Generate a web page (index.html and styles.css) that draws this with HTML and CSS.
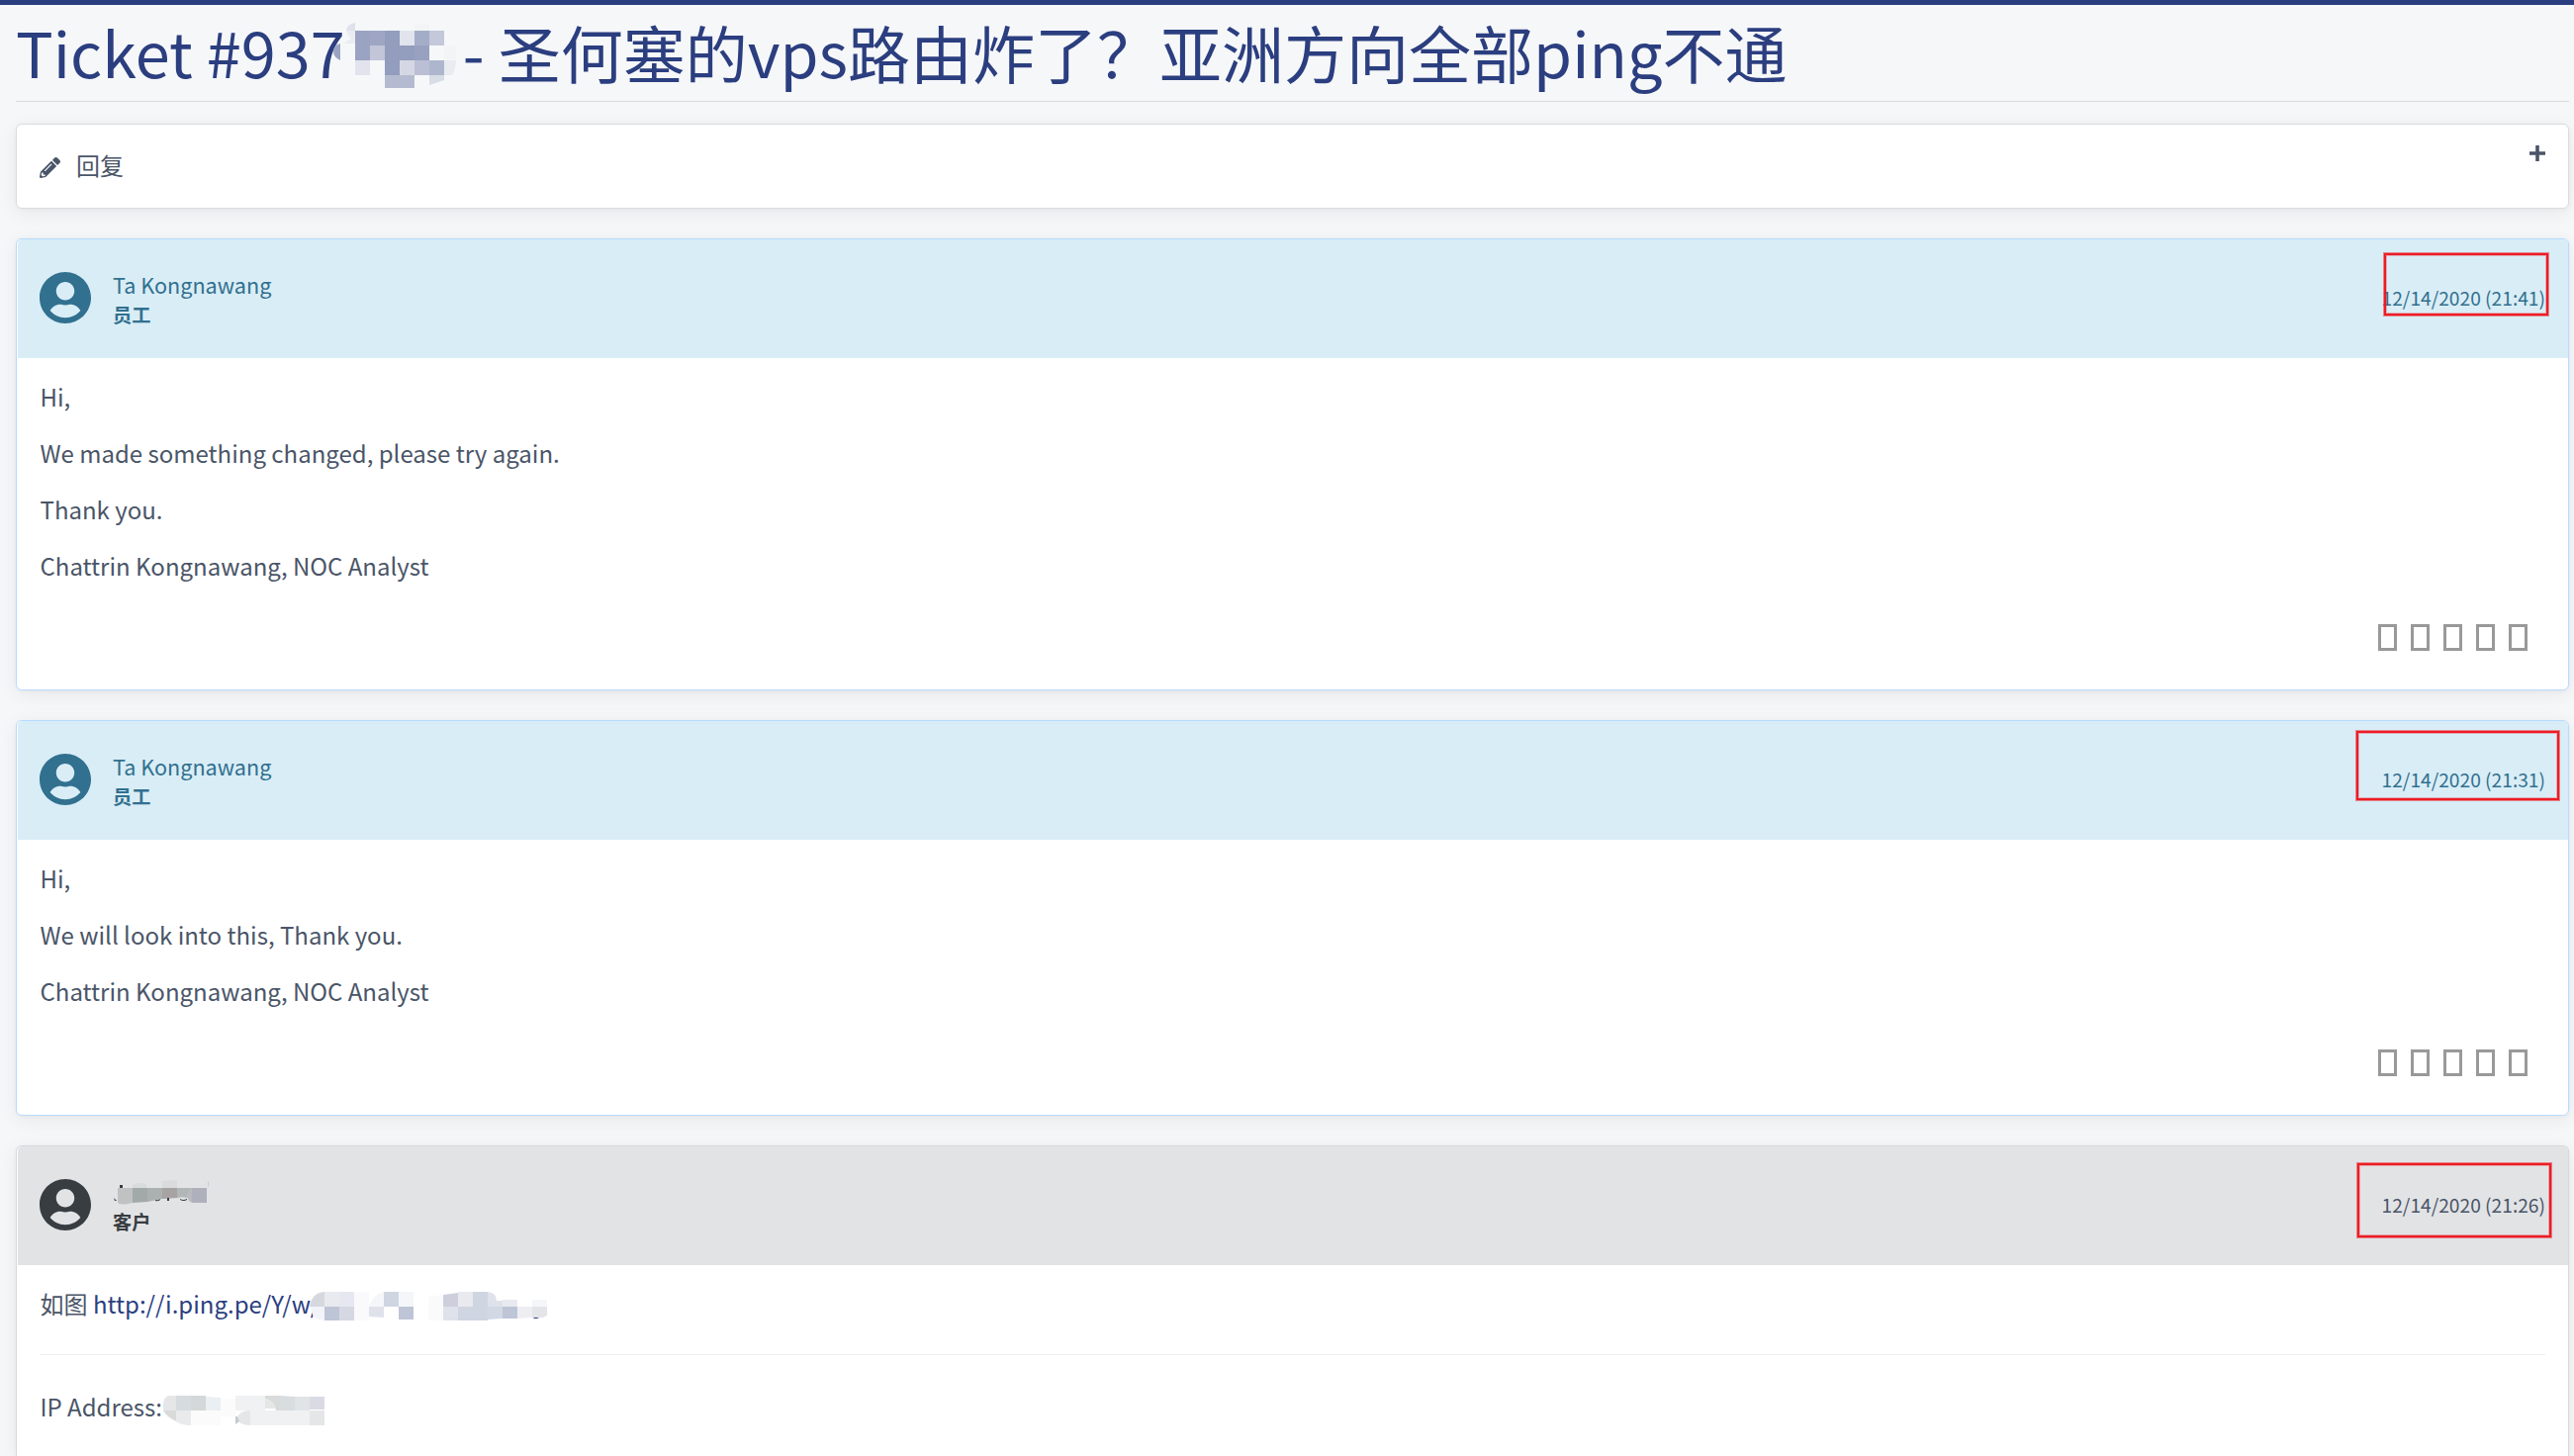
FILE: index.html
```
<!DOCTYPE html>
<html lang="zh-CN">
<head>
    <meta charset="UTF-8">
    <meta name="viewport" content="width=device-width, initial-scale=1.0">
    <title>Ticket #937 - 圣何塞的vps路由炸了？亚洲方向全部ping不通</title>
    <link rel="stylesheet" href="styles.css">
</head>
<body>
    <svg class="sprite" xmlns="http://www.w3.org/2000/svg">
        <symbol id="user" viewBox="0 8 496 496">
            <path d="M248 8C111 8 0 119 0 256s111 248 248 248 248-111 248-248S385 8 248 8zm0 96c48.6 0 88 39.4 88 88s-39.4 88-88 88-88-39.4-88-88 39.4-88 88-88zm0 344c-58.7 0-111.3-26.6-146.5-68.2 18.8-35.4 55.6-59.8 98.5-59.8 2.4 0 4.8.4 7.1 1.1 13 4.2 26.6 6.9 40.9 6.9 14.3 0 28-2.7 40.9-6.9 2.3-.7 4.7-1.1 7.1-1.1 42.9 0 79.7 24.4 98.5 59.8C359.3 421.4 306.7 448 248 448z"/>
        </symbol>
    </svg>

    <div class="page">
        <h1 class="title">Ticket #937<span class="censor censor-id"><svg viewBox="344 15 125 70" width="125" height="70">
            <path fill="#dfe2eb" d="M359 23v8h-9q1-7 9-8z"/>
            <path fill="#e9ecf1" d="M350 31h9v13h-12l8-5q-4-3-5-8z"/>
            <path fill="#9aa4c2" d="M344 44v17q-7-3-7-9t7-8z"/>
            <path fill="#9aa3c1" d="M359 31h15v30h-15z"/>
            <path fill="#9ea6c4" d="M374 31h15v15h-15z"/>
            <path fill="#c2c6d8" d="M374 46h15v15h-15z"/>
            <path fill="#939dbd" d="M389 31h15v45h-15zM404 46h15v15h-15z"/>
            <path fill="#e1e4ec" d="M404 31h15v15h-15zM359 61h15v15h-15z"/>
            <path fill="#a3adc7" d="M419 31h15v15h-15z"/>
            <path fill="#c3c8da" d="M434 31h15v15h-15z"/>
            <path fill="#98a1c0" d="M419 46h15v15h-15z"/>
            <path fill="#d5d8e4" d="M404 61h15v15h-15z"/>
            <path fill="#babfd5" d="M419 61h15v15h-15z"/>
            <path fill="#aeb6cd" d="M434 61h15v15h-15z"/>
            <path fill="#b4bbd1" d="M389 76h30v13h-30z"/>
            <path fill="#d7dce6" d="M434 76h15v5l-15 5z"/>
            <path fill="#e8ebf0" d="M449 61h12q0 9-4 15h-8z"/>
            <path fill="#f2f4f6" d="M419 24h15v7h-15zM449 46h12v15h-12z"/>
        </svg></span> - 圣何塞的vps路由炸了？亚洲方向全部ping不通</h1>

        <div class="panel reply">
            <svg class="pencil" viewBox="0 0 512 512"><path d="M497.9 142.1l-46.1 46.1c-4.7 4.7-12.3 4.7-17 0l-111-111c-4.7-4.7-4.7-12.3 0-17l46.1-46.1c18.7-18.7 49.1-18.7 67.9 0l60.1 60.1c18.8 18.7 18.8 49.1 0 67.9zM284.2 99.8L21.6 362.4.4 483.9c-2.9 16.4 11.4 30.6 27.8 27.8l121.5-21.3 262.6-262.6c4.7-4.7 4.7-12.3 0-17l-111-111c-4.8-4.7-12.4-4.7-17.1 0zM124.1 339.9c-5.5-5.5-5.5-14.3 0-19.8l154-154c5.5-5.5 14.3-5.5 19.8 0s5.5 14.3 0 19.8l-154 154c-5.5 5.5-14.3 5.5-19.8 0zM88 424h48v36.3l-64.5 11.3-31.1-31.1L51.7 376H88v48z"/></svg>
            <span class="reply-label">回复</span>
            <svg class="plus" viewBox="0 0 16 16"><path d="M6.2 0h3.6v6.2H16v3.6H9.8V16H6.2V9.8H0V6.2h6.2z"/></svg>
        </div>

        <div class="panel staff">
            <div class="panel-head">
                <svg class="avatar"><use href="#user"/></svg>
                <div class="user">
                    <div class="name">Ta Kongnawang</div>
                    <div class="role">员工</div>
                </div>
                <div class="date">12/14/2020 (21:41)</div>
                <div class="mark mark-1"></div>
            </div>
            <div class="message">
                <p>Hi,</p>
                <p>We made something changed, please try again.</p>
                <p>Thank you.</p>
                <p>Chattrin Kongnawang, NOC Analyst</p>
            </div>
            <div class="rating"><span></span><span></span><span></span><span></span><span></span></div>
        </div>

        <div class="panel staff">
            <div class="panel-head">
                <svg class="avatar"><use href="#user"/></svg>
                <div class="user">
                    <div class="name">Ta Kongnawang</div>
                    <div class="role">员工</div>
                </div>
                <div class="date">12/14/2020 (21:31)</div>
                <div class="mark mark-2"></div>
            </div>
            <div class="message">
                <p>Hi,</p>
                <p>We will look into this, Thank you.</p>
                <p>Chattrin Kongnawang, NOC Analyst</p>
            </div>
            <div class="rating"><span></span><span></span><span></span><span></span><span></span></div>
        </div>

        <div class="panel client">
            <div class="panel-head">
                <svg class="avatar"><use href="#user"/></svg>
                <div class="user">
                    <div class="name"><svg class="censor-name" viewBox="114 1190 98 29" width="98" height="29">
                        <path fill="#dadbdd" d="M164 1194l15-1v8h-15zM134 1198q7-4 14-1v4h-14z"/>
                        <path fill="#c0c2c2" d="M119 1201h15v15q-12 3-15 0z"/>
                        <path fill="#a2a9a9" d="M134 1201h15v14l-15 1z"/>
                        <path fill="#abb0b0" d="M149 1201h15v11l-15 3z"/>
                        <path fill="#a7a3a2" d="M164 1201h15v10l-15 1z"/>
                        <path fill="#b1b6b7" d="M179 1201h15v12q-6-4-15-2z"/>
                        <path fill="#babbbe" d="M189 1208q2-6 5-7v15q-5-3-5-8z"/>
                        <path fill="#aeb1bb" d="M194 1201h15v15h-15z"/>
                        <path fill="#373c40" d="M121 1198h3v3h-3zM115 1211l3 3h-2zM157 1213q3 1 5-1v1q-2 2-5 1zM169 1211h2v3h-2zM182 1212q3 2 7 0v1q-3 2-7 0z"/>
                        <path fill="#bdd0dc" d="M210 1195h1v5h-1z"/>
                    </svg></div>
                    <div class="role">客户</div>
                </div>
                <div class="date">12/14/2020 (21:26)</div>
                <div class="mark mark-3"></div>
            </div>
            <div class="message">
                <p>如图 <a href="#">http://i.ping.pe/Y/w/</a><span class="censor censor-link"><svg viewBox="314 1304 242 34" width="242" height="34">
                    <path fill="#fff" d="M318 1306h30v30h-30z"/>
                    <path fill="#d6d8e0" d="M329 1306v15h-15q2-14 15-15z"/>
                    <path fill="#e9eaef" d="M329 1306h15v15h-15zM464 1306h15v15h-15zM509 1314h15v7h-15z"/>
                    <path fill="#e5e8f1" d="M344 1306h15v15h-15z"/>
                    <path fill="#fafafc" d="M359 1306h15v29h-15z"/>
                    <path fill="#f4f6f9" d="M389 1306v15h-15q4-12 15-15zM404 1306h15v15h-15zM539 1314h15v7h-15z"/>
                    <path fill="#d0d5e2" d="M389 1306h15v15h-15zM464 1321h30v14h-30zM479 1306h15v15h-15z"/>
                    <path fill="#f3f4fa" d="M314 1321h15v14q-12-1-13-9z"/>
                    <path fill="#bec5d6" d="M329 1321h15v14h-15zM404 1321h15v13h-15zM509 1321h15v12h-15z"/>
                    <path fill="#d5d8e2" d="M344 1321h15v14h-15z"/>
                    <path fill="#dfe2eb" d="M374 1321h15v11l-15-1zM449 1321h15v14h-15zM494 1306q9 1 9 9h6v6h-15z"/>
                    <path fill="#fafafa" d="M434 1311l15-2v26h-15z"/>
                    <path fill="#cdd0dc" d="M449 1309l15-2v14h-15z"/>
                    <path fill="#d2d8e4" d="M494 1321h15v12l-15 1z"/>
                    <path fill="#eeeef2" d="M524 1321h15v11l-15 1z"/>
                    <path fill="#e4e5e9" d="M539 1321h15v9l-4 2h-11z"/>
                    <path fill="#2b3e7f" d="M540 1332h6l-2 1h-3z"/>
                </svg></span></p>
                <hr>
                <p>IP Address: <span class="censor censor-ip"><svg viewBox="166 1409 164 34" width="164" height="34">
                    <path fill="#e4e6e7" d="M179 1411v15h-13q-1-15 6-15zM314 1426h15v15h-15zM254 1426v15q-12 0-13-7 1-8 13-8z"/>
                    <path fill="#d5dbdf" d="M179 1411h15v15h-15z"/>
                    <path fill="#d4d8d8" d="M194 1411h15v15h-15z"/>
                    <path fill="#e9eff3" d="M209 1412l15 1v13h-15z"/>
                    <path fill="#fbfbfb" d="M224 1414h15v18h-15zM194 1426h30v15h-30z"/>
                    <path fill="#f0f1f2" d="M239 1411h30v15h-30zM254 1426h60v15h-60z"/>
                    <path fill="#d9dbdb" d="M269 1411h15v15h-4q-2-10-11-12zM166 1426h13v11q-10-5-13-11z"/>
                    <path fill="#e5e6e6" d="M269 1414q9 2 11 10h-11z"/>
                    <path fill="#d8dde0" d="M284 1411l15 1v14h-15z"/>
                    <path fill="#e0e4e7" d="M299 1412h15v14h-15z"/>
                    <path fill="#dadae4" d="M314 1412h15v13h-15z"/>
                    <path fill="#e9eaeb" d="M179 1426h15v15q-10 0-15-4z"/>
                    <path fill="#c6cace" d="M239 1432h2l2 5-4 3z"/>
                </svg></span></p>
            </div>
        </div>
    </div>
</body>
</html>
```
FILE: styles.css
```
* {
    box-sizing: border-box;
}

body {
    margin: 0;
    height: 1472px;
    overflow: hidden;
    background: #f6f7f9;
    border-top: 5px solid #2b3e7f;
    font-family: 'Noto Sans CJK SC', sans-serif;
    font-size: 24px;
    line-height: 36px;
    color: #4a5568;
}

.sprite {
    position: absolute;
    width: 0;
    height: 0;
}

.page {
    padding: 12px 5px 0 16px;
}

.title {
    margin: 0 0 22px;
    padding-bottom: 15px;
    border-bottom: 1px solid #d9dbdd;
    font-size: 63px;
    font-weight: 400;
    line-height: 70px;
    color: #2b3e7f;
    white-space: nowrap;
}

/* pixelated blocks over private data */
.censor {
    display: inline-block;
    position: relative;
}

.censor svg {
    position: absolute;
    left: 0;
    overflow: visible;
}

.censor-id {
    width: 105px;
    height: 58px;
}

.censor-id svg {
    top: -6px;
    left: -5px;
}

.censor-link {
    width: 242px;
    height: 24px;
}

.censor-link svg {
    top: 0;
    left: -10px;
}

.censor-ip {
    width: 164px;
    height: 24px;
}

.censor-ip svg {
    top: 1px;
    left: -4px;
}

.censor-name {
    display: block;
}

.panel {
    margin-bottom: 30px;
    background: #fff;
    border: 1px solid #dadcde;
    border-radius: 6px;
    box-shadow: 0 4px 20px 1px rgba(0, 0, 0, 0.06), 0 1px 4px rgba(0, 0, 0, 0.04);
}

.reply {
    display: flex;
    align-items: flex-start;
    height: 86px;
    padding: 21px 23px 0;
}

.pencil {
    width: 21px;
    height: 21px;
    margin: 12px 16px 0 0;
    fill: #4a5568;
}

.reply-label {
    margin-top: 2px;
}

.plus {
    width: 16px;
    height: 16px;
    margin-left: auto;
    fill: #4a5568;
}

.staff {
    border-color: #b8daff;
}

.client {
    height: 314px;
    margin-bottom: 0;
    border-color: #d6d8db;
    border-bottom: 0;
    border-radius: 6px 6px 0 0;
}

.panel-head {
    position: relative;
    display: flex;
    align-items: flex-start;
    height: 120px;
    margin-left: 1px;
    padding: 31px 23px 0 22px;
    border-radius: 5px 5px 0 0;
}

.staff .panel-head {
    background: #d9edf6;
    color: #31708f;
}

.client .panel-head {
    background: #e2e3e5;
    color: #383d41;
}

.avatar {
    width: 52px;
    height: 52px;
    margin: 2px 22px 0 0;
    fill: currentColor;
}

.name {
    height: 29px;
    font-size: 21.6px;
    line-height: 29px;
}

.role {
    font-size: 19.2px;
    font-weight: 700;
    line-height: 33px;
}

.date {
    margin: 13px 0 0 auto;
    font-size: 19.2px;
    line-height: 30px;
}

.client .date {
    color: #4a5568;
}

/* red frames around the dates */
.mark {
    position: absolute;
    border: 2px solid #ed1c24;
    box-shadow: 0 0 0 1px rgba(237, 28, 36, 0.5), inset 0 0 0 1px rgba(237, 28, 36, 0.3);
}

.mark-1 {
    top: 14px;
    right: 20px;
    width: 166px;
    height: 63px;
}

.mark-2 {
    top: 10px;
    right: 9px;
    width: 205px;
    height: 70px;
}

.mark-3 {
    top: 17px;
    right: 17px;
    width: 196px;
    height: 75px;
}

.message {
    padding: 21px 23px 0;
}

.message p {
    margin: 0 0 21px;
    padding-left: 0.5px;
}

.message a {
    color: #2b3e7f;
    text-decoration: none;
}

.message hr {
    margin: 33px 0 34px;
    border: 0;
    border-top: 1px solid #edeef0;
}

.rating {
    display: flex;
    justify-content: flex-end;
    gap: 14px;
    padding: 20px 41px 39px 0;
}

.rating span {
    width: 19px;
    height: 27px;
    border: 3px solid #999;
}
```
